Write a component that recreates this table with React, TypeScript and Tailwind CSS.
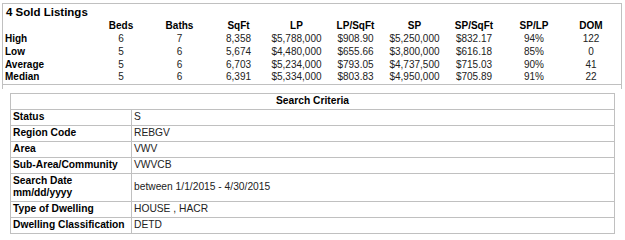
import React from "react";

const cols = ["Beds", "Baths", "SqFt", "LP", "LP/SqFt", "SP", "SP/SqFt", "SP/LP", "DOM"];
const rows: [string, string[]][] = [
  ["High", ["6", "7", "8,358", "$5,788,000", "$908.90", "$5,250,000", "$832.17", "94%", "122"]],
  ["Low", ["5", "6", "5,674", "$4,480,000", "$655.66", "$3,800,000", "$616.18", "85%", "0"]],
  ["Average", ["5", "6", "6,703", "$5,234,000", "$793.05", "$4,737,500", "$715.03", "90%", "41"]],
  ["Median", ["5", "6", "6,391", "$5,334,000", "$803.83", "$4,950,000", "$705.89", "91%", "22"]],
];

const criteria: [React.ReactNode, string, string][] = [
  ["Status", "S", "h-[16px]"],
  ["Region Code", "REBGV", "h-[16px]"],
  ["Area", "VWV", "h-[16px]"],
  ["Sub-Area/Community", "VWVCB", "h-[16px]"],
  [
    <>
      Search Date
      <br />
      mm/dd/yyyy
    </>,
    "between 1/1/2015 - 4/30/2015",
    "h-[28px]",
  ],
  ["Type of Dwelling", "HOUSE , HACR", "h-[16px]"],
  ["Dwelling Classification", "DETD", "h-[16px]"],
];

const gridCols =
  "grid grid-cols-[89px_58px_59px_59px_57px_61px_57px_62px_58px_56px]";

export default function App() {
  return (
    <div
      className="w-[625px] h-[240px] bg-white text-black overflow-hidden"
      style={{ fontFamily: '"Liberation Sans", Arial, sans-serif' }}
    >
      <div className="ml-[2px] mt-[3px] w-[620px] border-l border-r border-t border-[#c0c0c0] pb-[4px]">
        <div className="border-b border-[#c0c0c0]">
          <div className="h-[15px] pl-[3px] pt-[1px] text-[11.5px] leading-[14px] font-bold">
            4 Sold Listings
          </div>
          <div className={`${gridCols} h-[14px] items-center text-[10px] leading-[12px] font-bold`}>
            <div />
            {cols.map((c) => (
              <div key={c} className="text-center">
                {c}
              </div>
            ))}
          </div>
          {rows.map(([label, vals]) => (
            <div
              key={label}
              className={`${gridCols} h-[12.7px] items-center text-[10px] leading-[12px]`}
            >
              <div className="pl-[2px] font-bold">{label}</div>
              {vals.map((v, i) => (
                <div key={i} className="text-center text-[#222]">
                  {v}
                </div>
              ))}
            </div>
          ))}
        </div>
      </div>

      <div className="ml-[10px] mt-[4px] w-[605px] border-l border-t border-[#c0c0c0] text-[10.25px] leading-[12px]">
        <div className="h-[16px] border-r border-b border-[#c0c0c0] flex items-center justify-center font-bold">
          Search Criteria
        </div>
        {criteria.map(([label, value, h], i) => (
          <div key={i} className={`grid grid-cols-[121px_1fr] ${h}`}>
            <div className="border-r border-b border-[#c0c0c0] flex items-center pl-[2px] font-bold">
              <div>{label}</div>
            </div>
            <div className="border-r border-b border-[#c0c0c0] flex items-center pl-[2px] text-[#222]">
              {value}
            </div>
          </div>
        ))}
      </div>
    </div>
  );
}
